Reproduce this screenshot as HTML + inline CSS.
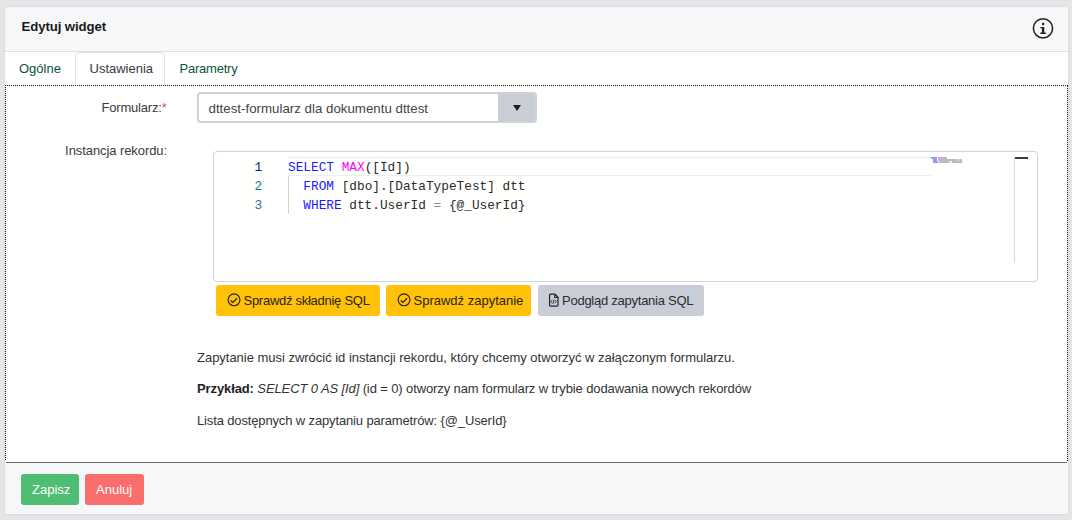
<!DOCTYPE html>
<html><head><meta charset="utf-8">
<style>
*{box-sizing:border-box;margin:0;padding:0}
html,body{width:1072px;height:520px;overflow:hidden;background:#e4e5e7;font-family:"Liberation Sans",sans-serif;font-size:13px;color:#333}
.a{position:absolute;white-space:nowrap}
</style></head><body>
<div class="a" style="left:4px;top:6px;width:1065px;height:509px;border:1px solid #dcdde0;border-radius:4px;background:#fff;overflow:hidden"><div class="a" style="left:0;top:0;width:1063px;height:45px;background:#f6f7f9;border-bottom:1px solid #dfe1e4"></div><div class="a" style="left:0;top:456px;width:1063px;height:51px;background:#f6f7f9"></div></div><div class="a " style="left:21.5px;top:20.03px;font-size:13.2px;line-height:13.2px;font-weight:bold;color:#1a1a1a;letter-spacing:-0.09px;font-family:'Liberation Sans',sans-serif;">Edytuj widget</div>
<svg class="a" style="left:1032px;top:17px" width="23" height="23" viewBox="0 0 23 23"><circle cx="11" cy="11.3" r="9.6" fill="none" stroke="#222" stroke-width="1.55"/><circle cx="11.1" cy="6.9" r="1.25" fill="#222"/><path d="M8.4 9.9 H12.3 V15.6 H13.8 V16.9 H8.3 V15.6 H9.9 V11.2 H8.4 Z" fill="#222"/></svg><div class="a" style="left:75px;top:52px;width:90px;height:34px;border:1px solid #dee2e6;border-bottom:none;border-radius:4px 4px 0 0;background:#fff"></div><div class="a " style="left:19px;top:62.00px;font-size:13px;line-height:13px;font-weight:normal;color:#0e5245;letter-spacing:0px;font-family:'Liberation Sans',sans-serif;">Ogólne</div>
<div class="a " style="left:89.5px;top:62.00px;font-size:13px;line-height:13px;font-weight:normal;color:#373a3f;letter-spacing:0px;font-family:'Liberation Sans',sans-serif;">Ustawienia</div>
<div class="a " style="left:179.5px;top:62.00px;font-size:13px;line-height:13px;font-weight:normal;color:#0e5245;letter-spacing:-0.22px;font-family:'Liberation Sans',sans-serif;">Parametry</div>
<div class="a" style="left:5px;top:85px;width:1063px;height:1px;background:repeating-linear-gradient(90deg,#161616 0 1px,transparent 1px 2px)"></div><div class="a" style="left:5px;top:85px;width:1px;height:376px;background:repeating-linear-gradient(180deg,#161616 0 1px,transparent 1px 2px)"></div><div class="a" style="left:1067px;top:86px;width:1px;height:375px;background:repeating-linear-gradient(180deg,#161616 0 1px,transparent 1px 2px)"></div><div class="a" style="left:6px;top:462px;width:1061px;height:1px;background:#686868"></div><div class="a " style="left:0px;top:101.40px;font-size:13px;line-height:13px;font-weight:normal;color:#3b3b3b;letter-spacing:-0.2px;font-family:'Liberation Sans',sans-serif;width:166.5px;text-align:right">Formularz:<span style="color:#e34f4f">*</span></div>
<div class="a " style="left:0px;top:144.30px;font-size:13px;line-height:13px;font-weight:normal;color:#3b3b3b;letter-spacing:-0.08px;font-family:'Liberation Sans',sans-serif;width:167px;text-align:right">Instancja rekordu:</div>
<div class="a" style="left:197px;top:92px;width:340px;height:31px;border:2px solid #cdd1d8;border-radius:4px;background:#fff;overflow:hidden"><div class="a" style="left:299px;top:0;width:39px;height:27px;background:#c9cdd4"></div></div><svg class="a" style="left:512px;top:104px" width="10" height="8" viewBox="0 0 10 8"><path d="M1 1 H9 L5 7 Z" fill="#1d1f24"/></svg><div class="a " style="left:208.5px;top:101.64px;font-size:13.3px;line-height:13.3px;font-weight:normal;color:#444;letter-spacing:0px;font-family:'Liberation Sans',sans-serif;">dttest-formularz dla dokumentu dttest</div>
<div class="a" style="left:213px;top:151px;width:825px;height:131px;border:1px solid #cfd4db;border-radius:4px;background:#fff"></div><div class="a" style="left:224px;top:157px;width:804px;height:106px;background:#fffffe"></div><div class="a" style="left:288px;top:157px;width:643px;height:19px;border-top:1px solid #eeeeee;border-bottom:1px solid #eeeeee"></div><div class="a" style="left:288px;top:176px;width:1px;height:38px;background:#d3d3d3"></div><div class="a" style="left:1014px;top:157px;width:1px;height:106px;background:#d9d9d9"></div><div class="a" style="left:1015px;top:157px;width:13px;height:2px;background:#3c3c3c"></div><div class="a " style="left:254.5px;top:162.18px;font-size:12.78px;line-height:12.78px;font-weight:normal;color:#0b216f;letter-spacing:0px;font-family:'Liberation Mono',monospace;">1</div>
<div class="a " style="left:254.5px;top:181.18px;font-size:12.78px;line-height:12.78px;font-weight:normal;color:#237893;letter-spacing:0px;font-family:'Liberation Mono',monospace;">2</div>
<div class="a " style="left:254.5px;top:200.18px;font-size:12.78px;line-height:12.78px;font-weight:normal;color:#237893;letter-spacing:0px;font-family:'Liberation Mono',monospace;">3</div>
<div class="a " style="left:288px;top:162.18px;font-size:12.78px;line-height:12.78px;font-weight:normal;color:#2a2a2a;letter-spacing:0px;font-family:'Liberation Mono',monospace;white-space:pre"><span style="color:#1a1aff">SELECT</span> <span style="color:#ff00ff">MAX</span>([Id])</div>
<div class="a " style="left:288px;top:181.18px;font-size:12.78px;line-height:12.78px;font-weight:normal;color:#2a2a2a;letter-spacing:0px;font-family:'Liberation Mono',monospace;white-space:pre">  <span style="color:#1a1aff">FROM</span> [dbo].[DataTypeTest] dtt</div>
<div class="a " style="left:288px;top:200.18px;font-size:12.78px;line-height:12.78px;font-weight:normal;color:#2a2a2a;letter-spacing:0px;font-family:'Liberation Mono',monospace;white-space:pre">  <span style="color:#1a1aff">WHERE</span> dtt.UserId <span style="color:#778899">=</span> {@_UserId}</div>
<div class="a" style="left:931px;top:157px;width:1px;height:2px;background:#4b55ff;opacity:0.6"></div><div class="a" style="left:932px;top:157px;width:1px;height:2px;background:#4b55ff;opacity:0.6"></div><div class="a" style="left:933px;top:157px;width:1px;height:2px;background:#4b55ff;opacity:0.6"></div><div class="a" style="left:934px;top:157px;width:1px;height:2px;background:#4b55ff;opacity:0.6"></div><div class="a" style="left:935px;top:157px;width:1px;height:2px;background:#4b55ff;opacity:0.6"></div><div class="a" style="left:936px;top:157px;width:1px;height:2px;background:#4b55ff;opacity:0.6"></div><div class="a" style="left:938px;top:157px;width:1px;height:2px;background:#ff33ff;opacity:0.6"></div><div class="a" style="left:939px;top:157px;width:1px;height:2px;background:#ff33ff;opacity:0.6"></div><div class="a" style="left:940px;top:157px;width:1px;height:2px;background:#ff33ff;opacity:0.6"></div><div class="a" style="left:941px;top:157px;width:1px;height:2px;background:#222;opacity:0.3"></div><div class="a" style="left:942px;top:157px;width:1px;height:2px;background:#222;opacity:0.3"></div><div class="a" style="left:943px;top:157px;width:1px;height:2px;background:#222;opacity:0.3"></div><div class="a" style="left:944px;top:157px;width:1px;height:2px;background:#222;opacity:0.3"></div><div class="a" style="left:945px;top:157px;width:1px;height:2px;background:#222;opacity:0.3"></div><div class="a" style="left:946px;top:157px;width:1px;height:2px;background:#222;opacity:0.3"></div><div class="a" style="left:933px;top:159px;width:1px;height:2px;background:#4b55ff;opacity:0.6"></div><div class="a" style="left:934px;top:159px;width:1px;height:2px;background:#4b55ff;opacity:0.6"></div><div class="a" style="left:935px;top:159px;width:1px;height:2px;background:#4b55ff;opacity:0.6"></div><div class="a" style="left:936px;top:159px;width:1px;height:2px;background:#4b55ff;opacity:0.6"></div><div class="a" style="left:938px;top:159px;width:1px;height:2px;background:#222;opacity:0.3"></div><div class="a" style="left:939px;top:159px;width:1px;height:2px;background:#222;opacity:0.3"></div><div class="a" style="left:940px;top:159px;width:1px;height:2px;background:#222;opacity:0.3"></div><div class="a" style="left:941px;top:159px;width:1px;height:2px;background:#222;opacity:0.3"></div><div class="a" style="left:942px;top:159px;width:1px;height:2px;background:#222;opacity:0.3"></div><div class="a" style="left:943px;top:159px;width:1px;height:2px;background:#222;opacity:0.3"></div><div class="a" style="left:944px;top:159px;width:1px;height:2px;background:#222;opacity:0.3"></div><div class="a" style="left:945px;top:159px;width:1px;height:2px;background:#222;opacity:0.3"></div><div class="a" style="left:946px;top:159px;width:1px;height:2px;background:#222;opacity:0.3"></div><div class="a" style="left:947px;top:159px;width:1px;height:2px;background:#222;opacity:0.3"></div><div class="a" style="left:948px;top:159px;width:1px;height:2px;background:#222;opacity:0.3"></div><div class="a" style="left:949px;top:159px;width:1px;height:2px;background:#222;opacity:0.3"></div><div class="a" style="left:950px;top:159px;width:1px;height:2px;background:#222;opacity:0.3"></div><div class="a" style="left:951px;top:159px;width:1px;height:2px;background:#222;opacity:0.3"></div><div class="a" style="left:952px;top:159px;width:1px;height:2px;background:#222;opacity:0.3"></div><div class="a" style="left:953px;top:159px;width:1px;height:2px;background:#222;opacity:0.3"></div><div class="a" style="left:954px;top:159px;width:1px;height:2px;background:#222;opacity:0.3"></div><div class="a" style="left:955px;top:159px;width:1px;height:2px;background:#222;opacity:0.3"></div><div class="a" style="left:956px;top:159px;width:1px;height:2px;background:#222;opacity:0.3"></div><div class="a" style="left:957px;top:159px;width:1px;height:2px;background:#222;opacity:0.3"></div><div class="a" style="left:959px;top:159px;width:1px;height:2px;background:#222;opacity:0.3"></div><div class="a" style="left:960px;top:159px;width:1px;height:2px;background:#222;opacity:0.3"></div><div class="a" style="left:961px;top:159px;width:1px;height:2px;background:#222;opacity:0.3"></div><div class="a" style="left:933px;top:161px;width:1px;height:2px;background:#4b55ff;opacity:0.6"></div><div class="a" style="left:934px;top:161px;width:1px;height:2px;background:#4b55ff;opacity:0.6"></div><div class="a" style="left:935px;top:161px;width:1px;height:2px;background:#4b55ff;opacity:0.6"></div><div class="a" style="left:936px;top:161px;width:1px;height:2px;background:#4b55ff;opacity:0.6"></div><div class="a" style="left:937px;top:161px;width:1px;height:2px;background:#4b55ff;opacity:0.6"></div><div class="a" style="left:939px;top:161px;width:1px;height:2px;background:#222;opacity:0.3"></div><div class="a" style="left:940px;top:161px;width:1px;height:2px;background:#222;opacity:0.3"></div><div class="a" style="left:941px;top:161px;width:1px;height:2px;background:#222;opacity:0.3"></div><div class="a" style="left:942px;top:161px;width:1px;height:2px;background:#222;opacity:0.3"></div><div class="a" style="left:943px;top:161px;width:1px;height:2px;background:#222;opacity:0.3"></div><div class="a" style="left:944px;top:161px;width:1px;height:2px;background:#222;opacity:0.3"></div><div class="a" style="left:945px;top:161px;width:1px;height:2px;background:#222;opacity:0.3"></div><div class="a" style="left:946px;top:161px;width:1px;height:2px;background:#222;opacity:0.3"></div><div class="a" style="left:947px;top:161px;width:1px;height:2px;background:#222;opacity:0.3"></div><div class="a" style="left:948px;top:161px;width:1px;height:2px;background:#222;opacity:0.3"></div><div class="a" style="left:950px;top:161px;width:1px;height:2px;background:#889;opacity:0.4"></div><div class="a" style="left:952px;top:161px;width:1px;height:2px;background:#222;opacity:0.3"></div><div class="a" style="left:953px;top:161px;width:1px;height:2px;background:#222;opacity:0.3"></div><div class="a" style="left:954px;top:161px;width:1px;height:2px;background:#222;opacity:0.3"></div><div class="a" style="left:955px;top:161px;width:1px;height:2px;background:#222;opacity:0.3"></div><div class="a" style="left:956px;top:161px;width:1px;height:2px;background:#222;opacity:0.3"></div><div class="a" style="left:957px;top:161px;width:1px;height:2px;background:#222;opacity:0.3"></div><div class="a" style="left:958px;top:161px;width:1px;height:2px;background:#222;opacity:0.3"></div><div class="a" style="left:959px;top:161px;width:1px;height:2px;background:#222;opacity:0.3"></div><div class="a" style="left:960px;top:161px;width:1px;height:2px;background:#222;opacity:0.3"></div><div class="a" style="left:961px;top:161px;width:1px;height:2px;background:#222;opacity:0.3"></div><div class="a" style="left:216px;top:285px;width:164px;height:31px;border-radius:3px;background:#ffc10a"></div><div class="a" style="left:386px;top:285px;width:145px;height:31px;border-radius:3px;background:#ffc10a"></div><div class="a" style="left:538px;top:285px;width:166px;height:31px;border-radius:3px;background:#c9cdd5"></div><svg class="a" style="left:226.5px;top:293px" width="14" height="14" viewBox="0 0 14 14"><circle cx="7.05" cy="6.85" r="5.9" fill="none" stroke="#2b2510" stroke-width="1.2"/><path d="M3.7 7.4 L5.9 9.4 L10.1 5.3" fill="none" stroke="#2b2510" stroke-width="1.3"/></svg><svg class="a" style="left:396.5px;top:293px" width="14" height="14" viewBox="0 0 14 14"><circle cx="7.05" cy="6.85" r="5.9" fill="none" stroke="#2b2510" stroke-width="1.2"/><path d="M3.7 7.4 L5.9 9.4 L10.1 5.3" fill="none" stroke="#2b2510" stroke-width="1.3"/></svg><svg class="a" style="left:547px;top:293px" width="13" height="15" viewBox="0 0 13 15"><path d="M2.6 2.2 Q2.6 1.2 3.6 1.2 L7.9 1.2 L11 4.3 L11 12 Q11 13 10 13 L3.6 13 Q2.6 13 2.6 12 Z" fill="none" stroke="#23262c" stroke-width="1.25"/><path d="M7.7 1.3 L7.7 4.5 L10.9 4.5" fill="none" stroke="#23262c" stroke-width="1.1"/><path d="M5.3 6.9 L4 8.6 L5.3 10.3 M7.9 6.9 L9.2 8.6 L7.9 10.3 M7.1 6.5 L6.1 10.7" fill="none" stroke="#23262c" stroke-width="0.85"/></svg><div class="a " style="left:243.5px;top:294.10px;font-size:13px;line-height:13px;font-weight:normal;color:#2b2510;letter-spacing:-0.27px;font-family:'Liberation Sans',sans-serif;">Sprawdź składnię SQL</div>
<div class="a " style="left:413.5px;top:294.10px;font-size:13px;line-height:13px;font-weight:normal;color:#2b2510;letter-spacing:0px;font-family:'Liberation Sans',sans-serif;">Sprawdź zapytanie</div>
<div class="a " style="left:562px;top:294.10px;font-size:13px;line-height:13px;font-weight:normal;color:#2a2d33;letter-spacing:-0.25px;font-family:'Liberation Sans',sans-serif;">Podgląd zapytania SQL</div>
<div class="a " style="left:197px;top:351.00px;font-size:13px;line-height:13px;font-weight:normal;color:#333;letter-spacing:-0.02px;font-family:'Liberation Sans',sans-serif;">Zapytanie musi zwrócić id instancji rekordu, który chcemy otworzyć w załączonym formularzu.</div>
<div class="a " style="left:197px;top:382.40px;font-size:13px;line-height:13px;font-weight:normal;color:#333;letter-spacing:-0.11px;font-family:'Liberation Sans',sans-serif;"><b style="color:#1e1e1e">Przykład:</b> <i>SELECT 0 AS [Id]</i> (id = 0) otworzy nam formularz w trybie dodawania nowych rekordów</div>
<div class="a " style="left:197px;top:413.60px;font-size:13px;line-height:13px;font-weight:normal;color:#333;letter-spacing:-0.14px;font-family:'Liberation Sans',sans-serif;">Lista dostępnych w zapytaniu parametrów: {@_UserId}</div>
<div class="a" style="left:21px;top:474px;width:58px;height:31px;border-radius:3px;background:#4fbd74"></div><div class="a" style="left:85px;top:474px;width:59px;height:31px;border-radius:3px;background:#f96e6c"></div><div class="a " style="left:32px;top:482.80px;font-size:13px;line-height:13px;font-weight:normal;color:#fff;letter-spacing:0px;font-family:'Liberation Sans',sans-serif;">Zapisz</div>
<div class="a " style="left:96px;top:482.80px;font-size:13px;line-height:13px;font-weight:normal;color:#fff;letter-spacing:0px;font-family:'Liberation Sans',sans-serif;">Anuluj</div>
</body></html>
